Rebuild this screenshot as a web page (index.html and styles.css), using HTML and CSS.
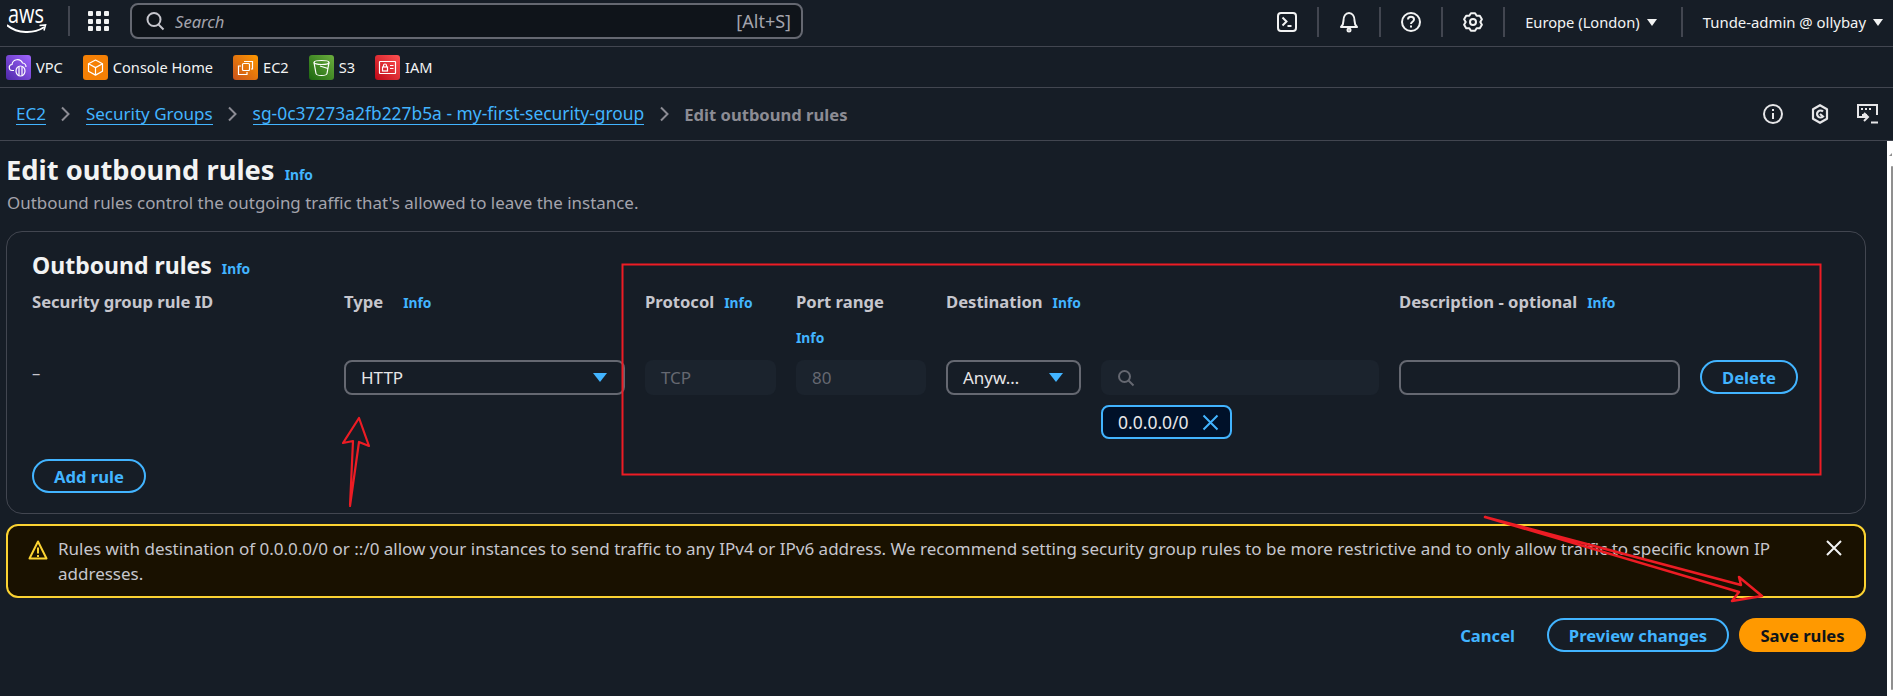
FILE: index.html
```html
<!DOCTYPE html>
<html lang="en">
<head>
<meta charset="utf-8">
<title>Edit outbound rules</title>
<link rel="stylesheet" href="styles.css">
</head>
<body>
<header class="topnav">
  <svg class="aws-logo" width="48" height="32" viewBox="0 0 48 32"><text x="1" y="18" class="aws-text" textLength="36" lengthAdjust="spacingAndGlyphs">aws</text><path d="M0.500 20.500c10 8 26 8.500 36 2" fill="none" stroke="#fff" stroke-width="2" stroke-linecap="round"/><path d="M32.500 20.500l6-.5-1.500 5.500" fill="none" stroke="#fff" stroke-width="1.600"/></svg>
  <span class="vsep logo-sep"></span>
  <svg class="grid-icon" width="21" height="20" viewBox="0 0 21 20" fill="#f2f3f3"><rect x="0" y="0" width="5" height="5" rx="1"/><rect x="8" y="0" width="5" height="5" rx="1"/><rect x="16" y="0" width="5" height="5" rx="1"/><rect x="0" y="8" width="5" height="5" rx="1"/><rect x="8" y="8" width="5" height="5" rx="1"/><rect x="16" y="8" width="5" height="5" rx="1"/><rect x="0" y="15" width="5" height="5" rx="1"/><rect x="8" y="15" width="5" height="5" rx="1"/><rect x="16" y="15" width="5" height="5" rx="1"/></svg>
  <div class="searchbox">
    <svg width="20" height="20" viewBox="0 0 20 20" fill="none" stroke="#c6c6cd" stroke-width="2"><circle cx="9" cy="8.500" r="6.500"/><path d="M13.500 13.500l5 5"/></svg>
    <span class="search-ph">Search</span>
    <span class="search-key">[Alt+S]</span>
  </div>
  <div class="nav-right">
    <svg class="nav-ic" width="20" height="20" viewBox="0 0 20 20" fill="none" stroke="#f2f3f3" stroke-width="2"><rect x="1" y="1" width="18" height="18" rx="3"/><path d="M5.500 5.500l4 4-4 4"/><path d="M10.500 14h4"/></svg>
    <span class="vsep"></span>
    <svg class="nav-ic" width="20" height="22" viewBox="0 0 20 22" fill="none" stroke="#f2f3f3" stroke-width="2"><path d="M2 16c2-2 2.500-3 2.500-6.500C4.500 5.500 6.500 2 10 2s5.500 3.500 5.500 7.500c0 3.500.5 4.500 2.500 6.500z" stroke-linejoin="round"/><circle cx="10" cy="19" r="1.500"/></svg>
    <span class="vsep"></span>
    <svg class="nav-ic" width="20" height="20" viewBox="0 0 20 20" fill="none" stroke="#f2f3f3" stroke-width="2"><circle cx="10" cy="10" r="9"/><path d="M7 7.500C7 5.500 8.500 4.800 10 4.800s3 .9 3 2.600c0 2.300-3 2.300-3 4.600"/><path d="M10 13.500v2"/></svg>
    <span class="vsep"></span>
    <svg class="nav-ic" width="20" height="20" viewBox="0 0 20 20" fill="none" stroke="#f2f3f3" stroke-width="2" stroke-linejoin="round"><path d="M7.900 1.200h4.200l1.550 2.480 3.150-.02 2.090 3.620-1.590 2.720 1.590 2.720-2.090 3.620-3.150-.02-1.550 2.480H7.900l-1.550-2.480-3.150.02-2.090-3.620L2.700 10 1.110 7.280 3.200 3.660l3.150.02z"/><circle cx="10" cy="10" r="3"/></svg>
    <span class="vsep"></span>
    <span class="nav-menu region">Europe (London)<i class="nav-caret"></i></span>
    <span class="vsep"></span>
    <span class="nav-menu user">Tunde-admin @ ollybay<i class="nav-caret"></i></span>
  </div>
</header>

<nav class="servicebar">
  <a class="svc svc-vpc">
    <svg class="svc-ic ic-vpc" viewBox="0 0 25 25" fill="none" stroke="#fff" stroke-width="1.200"><path d="M8 15.500H6.500a3 3 0 0 1-.5-6 5.500 5.500 0 0 1 10.500-1.500A4 4 0 0 1 20 12"/><ellipse cx="14.500" cy="16" rx="4.500" ry="5"/><path d="M13 11.500v9M16 11.500v9"/></svg>VPC</a>
  <a class="svc svc-home">
    <svg class="svc-ic ic-home" viewBox="0 0 25 25" fill="none" stroke="#fff" stroke-width="1.200" stroke-linejoin="round"><path d="M12.500 5l7 3.800v7.500l-7 3.800-7-3.800V8.800z"/><path d="M5.500 8.800l7 3.800 7-3.800M12.500 12.600v7.500"/></svg>Console Home</a>
  <a class="svc svc-ec2">
    <svg class="svc-ic ic-ec2" viewBox="0 0 25 25" fill="none" stroke="#fff" stroke-width="1.200"><rect x="9.500" y="8.500" width="7" height="7" rx="1"/><path d="M8 11H5.500v8.500H14V17"/><path d="M11 6.500h8.500V14H18"/></svg>EC2</a>
  <a class="svc svc-s3">
    <svg class="svc-ic ic-s3" viewBox="0 0 25 25" fill="none" stroke="#fff" stroke-width="1.200"><ellipse cx="12.500" cy="7.500" rx="7.500" ry="2"/><path d="M5 7.500l2 11c.3 1.500 3 2 5.500 2s5.200-.5 5.500-2l2-11"/><path d="M11 11l8 2.500"/></svg>S3</a>
  <a class="svc svc-iam">
    <svg class="svc-ic ic-iam" viewBox="0 0 25 25" fill="none" stroke="#fff" stroke-width="1.200"><rect x="4.500" y="6.500" width="16" height="12" rx=".5"/><rect x="7.500" y="12" width="5" height="4"/><path d="M8.500 12v-1.500a1.500 1.500 0 0 1 3 0V12M15 10.500h3.500M15 13.500h3.500"/></svg>IAM</a>
</nav>

<div class="crumbbar">
  <a class="crumb">EC2</a>
  <svg class="chev" width="9" height="16" viewBox="0 0 9 16" fill="none" stroke="#8c8c94" stroke-width="2"><path d="M1 1.500L7.500 8 1 14.500"/></svg>
  <a class="crumb">Security Groups</a>
  <svg class="chev" width="9" height="16" viewBox="0 0 9 16" fill="none" stroke="#8c8c94" stroke-width="2"><path d="M1 1.500L7.500 8 1 14.500"/></svg>
  <a class="crumb crumb-id">sg-0c37273a2fb227b5a - my-first-security-group</a>
  <svg class="chev" width="9" height="16" viewBox="0 0 9 16" fill="none" stroke="#8c8c94" stroke-width="2"><path d="M1 1.500L7.500 8 1 14.500"/></svg>
  <span class="crumb-now">Edit outbound rules</span>
  <div class="crumb-tools">
    <svg width="20" height="20" viewBox="0 0 20 20" fill="none" stroke="#e6e6e8" stroke-width="2"><circle cx="10" cy="10" r="9"/><path d="M10 9v6M10 5v2"/></svg>
    <svg width="18" height="20" viewBox="0 0 18 20" fill="none" stroke="#e6e6e8" stroke-width="2.200"><path d="M9 1.200l7 4v9.600l-7 4-7-4V5.200z" stroke-linejoin="round"/><path d="M12 7.500a3.500 3.500 0 1 0 0 5L9 10"/></svg>
    <svg width="21" height="20" viewBox="0 0 21 20" fill="none" stroke="#e6e6e8" stroke-width="2"><path d="M6 13H1V1h19v10"/><path d="M4 5h2M8 5h2M12 5h2" stroke-dasharray="2 1"/><path d="M5 11h5v0M7 9l4 4-4 4M1 13h9M14 18.500h7" /></svg>
  </div>
</div>

<div class="page-row">
  <main class="content">
    <h1 class="page-title">Edit outbound rules <a class="info">Info</a></h1>
    <p class="page-sub">Outbound rules control the outgoing traffic that's allowed to leave the instance.</p>

    <section class="card">
      <h2 class="card-title">Outbound rules <a class="info">Info</a></h2>
      <div class="rules">
        <div class="th">Security group rule ID</div>
        <div class="th">Type<a class="info info-wide">Info</a></div>
        <div class="th">Protocol<a class="info">Info</a></div>
        <div class="th th-stack"><span>Port range</span><a class="info">Info</a></div>
        <div class="th th-wide">Destination<a class="info">Info</a></div>
        <div class="th th-desc">Description - optional<a class="info">Info</a></div>
        <div class="th"></div>

        <div class="dash">–</div>
        <div class="select">HTTP<i class="caret"></i></div>
        <div class="field-off">TCP</div>
        <div class="field-off">80</div>
        <div class="select">Anyw…<i class="caret"></i></div>
        <div class="cidr">
          <div class="field-off">
            <svg width="18" height="18" viewBox="0 0 18 18" fill="none" stroke="#656871" stroke-width="2"><circle cx="7.500" cy="7.500" r="5.500"/><path d="M11.500 11.500l5 5"/></svg>
          </div>
          <div class="chip">0.0.0.0/0
            <svg width="17" height="17" viewBox="0 0 17 17" fill="none" stroke="#42b4ff" stroke-width="2"><path d="M1.500 1.500l14 14M15.500 1.500l-14 14"/></svg>
          </div>
        </div>
        <div class="input"></div>
        <div><button class="btn btn-normal btn-delete">Delete</button></div>
      </div>
      <button class="btn btn-normal btn-add">Add rule</button>
    </section>

    <div class="alert">
      <svg class="alert-ic" width="20" height="20" viewBox="0 0 20 20" fill="none" stroke="#fbd332" stroke-width="2" stroke-linejoin="round"><path d="M10 1.500l8.500 17h-17z"/><path d="M10 7.500v6M10 15v2"/></svg>
      <p class="alert-text">Rules with destination of 0.0.0.0/0 or ::/0 allow your instances to send traffic to any IPv4 or IPv6 address. We recommend setting security group rules to be more restrictive and to only allow traffic to specific known IP addresses.</p>
      <svg class="alert-x" width="16" height="16" viewBox="0 0 16 16" fill="none" stroke="#f2f3f3" stroke-width="2"><path d="M1 1l14 14M15 1L1 15"/></svg>
    </div>

    <div class="actions">
      <a class="btn-link">Cancel</a>
      <button class="btn btn-normal btn-preview">Preview changes</button>
      <button class="btn btn-primary">Save rules</button>
    </div>
  </main>
  <div class="scrollbar"><i class="scroll-arrow"></i><i class="scroll-thumb"></i></div>
</div>

<svg class="annotations" width="1893" height="696" viewBox="0 0 1893 696" fill="none" stroke="#ed1c24">
  <rect x="622.500" y="264.500" width="1198" height="210" stroke-width="2"/>
  <path d="M350 506L353 441L343 443L359 418L369 446L359 442Z" stroke-width="2.200" stroke-linejoin="round"/>
  <path d="M1485 517L1741 585L1739 577L1762 596L1732 601L1739 592Z" stroke-width="2.500" stroke-linejoin="round"/>
</svg>
</body>
</html>
```

FILE: styles.css
```css
* { box-sizing: border-box; }
html, body { margin: 0; padding: 0; }
body {
  position: relative;
  width: 1893px;
  height: 696px;
  overflow: hidden;
  background: #161d26;
  color: #c6c6cd;
  font-family: "Noto Sans", "Open Sans", Roboto, sans-serif;
  font-size: 16.600px;
}
a { text-decoration: none; }

.topnav {
  display: flex;
  align-items: center;
  height: 47px;
  padding: 0 0 4px 7px;
  border-bottom: 1px solid #424650;
}
.aws-logo { flex: none; }
.aws-text { font-family: "Open Sans", sans-serif; font-size: 25px; fill: #fff; }
.vsep { flex: none; width: 2px; height: 30px; background: #424650; }
.logo-sep { margin-left: 13px; }
.grid-icon { margin-left: 18px; }
.searchbox {
  display: flex;
  align-items: center;
  width: 673px;
  height: 36px;
  margin-left: 21px;
  padding: 0 10px 0 13px;
  background: #0f141a;
  border: 2px solid #656871;
  border-radius: 8px;
}
.search-ph { margin-left: 10px; font-style: italic; color: #a4a4ad; }
.search-key { margin-left: auto; font-size: 18px; color: #a4a4ad; }
.nav-right { display: flex; align-items: center; margin-left: auto; margin-top: 2px; padding-right: 10px; gap: 20px; }
.nav-menu { display: flex; align-items: center; color: #f2f3f3; font-size: 14.700px; white-space: nowrap; }
.region { margin-right: 4px; }
.user { font-size: 14.900px; }
.nav-caret {
  width: 0; height: 0; margin-left: 7px;
  border-left: 5px solid transparent;
  border-right: 5px solid transparent;
  border-top: 7px solid #f2f3f3;
}
.servicebar {
  display: flex;
  align-items: center;
  height: 41px;
  padding-left: 6px;
  gap: 20px;
  border-bottom: 1px solid #424650;
}
.svc { display: flex; align-items: center; gap: 5px; color: #f2f3f3; font-size: 14.600px; }
.svc-ic { width: 25px; height: 25px; border-radius: 3px; flex: none; }
.ic-vpc { background: linear-gradient(45deg, #4d27a8, #a166ff); }
.ic-home { background: #f58005; }
.ic-ec2 { background: linear-gradient(45deg, #c8511b, #ff9900); }
.ic-s3 { background: linear-gradient(45deg, #1b660f, #6cae3e); }
.ic-iam { background: linear-gradient(45deg, #bd0816, #ff5252); }

.crumbbar {
  display: flex;
  align-items: center;
  height: 53px;
  padding: 0 15px 0 16px;
  gap: 15.500px;
  border-bottom: 1px solid #424650;
  font-size: 17px;
}
.crumb { color: #42b4ff; border-bottom: 1px solid #42b4ff; line-height: 21px; white-space: nowrap; }
.crumb-id { font-size: 17.400px; }
.crumb-now { color: #8c8c94; font-weight: 700; font-size: 16.600px; white-space: nowrap; }
.crumb-tools { display: flex; align-items: center; margin-left: auto; gap: 28px; }

.page-row { display: flex; height: 555px; }
.content { flex: 1; min-width: 0; padding: 11px 21px 0 6px; }
.scrollbar { position: relative; flex: none; width: 6px; background: #fff; display: flex; flex-direction: column; align-items: flex-end; }
.scroll-arrow { width: 0; height: 0; margin: 9px 1px 0 0; border-left: 3px solid transparent; border-right: 0; border-top: 3px solid transparent; border-bottom: 3px solid #8f8f8f; }
.scroll-thumb { width: 2px; height: 524px; margin-top: 10px; background: #8f8f8f; border-radius: 1px; }

.page-title { margin: 0; font-size: 27.300px; line-height: 36px; font-weight: 700; color: #f2f3f3; }
.page-sub { margin: 4px 0 0; padding-left: 1px; font-size: 16.930px; line-height: 22px; color: #a4a4ad; }
.info { margin-left: 10px; color: #42b4ff; font-size: 13.800px; font-weight: 700; line-height: 1; }
.page-title .info { margin-left: 3px; }
.card-title .info { margin-left: 4px; }

.card {
  height: 283px;
  margin-top: 17px;
  padding: 19px 0 0 25px;
  border: 1px solid #424650;
  border-radius: 16px;
}
.card-title { margin: 0; font-size: 23px; line-height: 28px; font-weight: 700; color: #f2f3f3; }
.rules {
  display: grid;
  grid-template-columns: 292px 281px 131px 130px 135px 278px 281px 98px;
  column-gap: 20px;
  margin-top: 12px;
}
.th { font-size: 16.600px; line-height: 22px; font-weight: 700; color: #c6c6cd; white-space: nowrap; }
.th-stack { display: flex; flex-direction: column; height: 69px; }
.th-stack .info { margin: 14px 0 0; line-height: 22px; }
.th-wide { grid-column: span 2; }
.info-wide { margin-left: 20px; }
.dash { color: #c6c6cd; line-height: 22px; padding-top: 2px; }
.select, .input, .field-off {
  display: flex;
  align-items: center;
  height: 35px;
  padding-left: 16px;
  border-radius: 8px;
  font-size: 17px;
}
.select { justify-content: space-between; padding-right: 16px; border: 2px solid #656871; color: #e6e6e8; padding-left: 15px; }
.input { border: 2px solid #656871; }
.field-off { background: #1b232d; color: #656871; }
.caret { width: 0; height: 0; border-left: 7px solid transparent; border-right: 7px solid transparent; border-top: 9px solid #42b4ff; }
.chip {
  display: inline-flex;
  align-items: center;
  gap: 13px;
  height: 34px;
  margin-top: 10px;
  padding: 0 11px 0 15px;
  background: #001129;
  border: 2px solid #42b4ff;
  border-radius: 8px;
  color: #e6e6e8;
  font-size: 17.500px;
}
.cidr { display: flex; flex-direction: column; align-items: flex-start; }
.cidr .field-off { width: 100%; }
.btn {
  height: 34px;
  border-radius: 17px;
  font: 700 16.600px "Noto Sans", "Open Sans", Roboto, sans-serif;
  background: transparent;
  cursor: pointer;
  padding: 0;
}
.btn-normal { border: 2px solid #42b4ff; color: #42b4ff; }
.btn-primary { width: 127px; border: 0; background: #ff9900; color: #0f141a; }
.btn-delete { width: 98px; }
.btn-add { width: 114px; margin-top: 20px; display: block; }
.btn-preview { width: 182px; }
.btn-link { color: #42b4ff; font-weight: 700; margin-right: 22px; }

.alert {
  display: flex;
  align-items: flex-start;
  height: 74px;
  margin-top: 10px;
  padding: 10px 22px 0 20px;
  background: #191100;
  border: 2px solid #fbd332;
  border-radius: 12px;
}
.alert-ic { flex: none; margin-top: 4px; }
.alert-text { flex: 1; margin: 0 40px 0 10px; font-size: 17px; line-height: 25px; color: #c6c6cd; }
.alert-x { flex: none; margin-top: 4px; }
.actions { display: flex; align-items: center; justify-content: flex-end; gap: 10px; margin-top: 20px; }

.annotations { position: absolute; left: 0; top: 0; pointer-events: none; }
```
